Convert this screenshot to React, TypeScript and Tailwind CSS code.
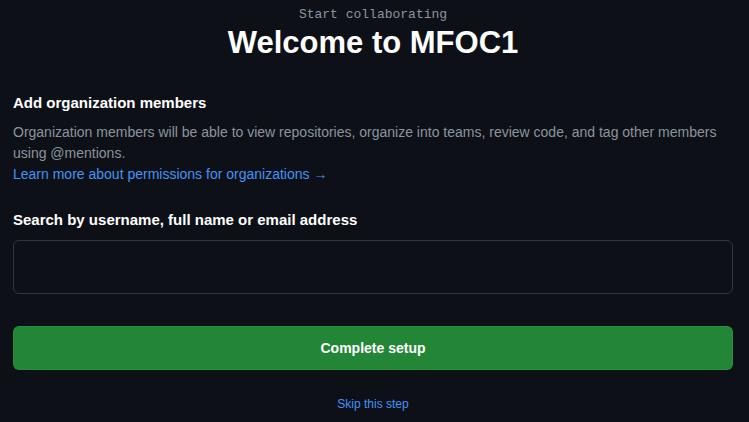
import React from "react";

export default function App() {
  return (
    <div className="min-h-screen bg-[#0d1117] pl-[13px] pr-[16px] font-['Liberation_Sans',sans-serif] text-[#e6edf3]">
      <div className="flex flex-col items-center pt-[5px]">
        <p className="font-['Liberation_Mono',monospace] text-[13px] leading-[20px] text-[#8b949e]">
          Start collaborating
        </p>
        <h1 className="mt-[-2px] text-[31px] font-semibold leading-[40px] text-white">
          Welcome to MFOC1
        </h1>
      </div>

      <h2 className="mt-[29px] text-[15px] font-semibold leading-[22px] text-white">
        Add organization members
      </h2>
      <p className="mt-[8px] text-[14px] leading-[21px] text-[#8b949e]">
        Organization members will be able to view repositories, organize into
        teams, review code, and tag other members using @mentions.
      </p>
      <a href="#" className="block text-[14px] leading-[21px] text-[#4493f8]">
        Learn more about permissions for organizations →
      </a>

      <label className="mt-[24px] block text-[15px] font-semibold leading-[22px] text-white">
        Search by username, full name or email address
      </label>
      <input
        type="text"
        className="mt-[9px] block h-[54px] w-full rounded-[6px] border border-[#30363d] bg-[#0d1117] px-3 text-[14px] text-white outline-none"
      />

      <button className="mt-[32px] flex h-[44px] w-full items-center justify-center rounded-[6px] border border-[#2ea043]/40 bg-[#238636] text-[14px] font-semibold text-white">
        Complete setup
      </button>

      <div className="mt-[25px] flex justify-center">
        <a href="#" className="text-[12px] leading-[18px] text-[#4493f8]">
          Skip this step
        </a>
      </div>
    </div>
  );
}
